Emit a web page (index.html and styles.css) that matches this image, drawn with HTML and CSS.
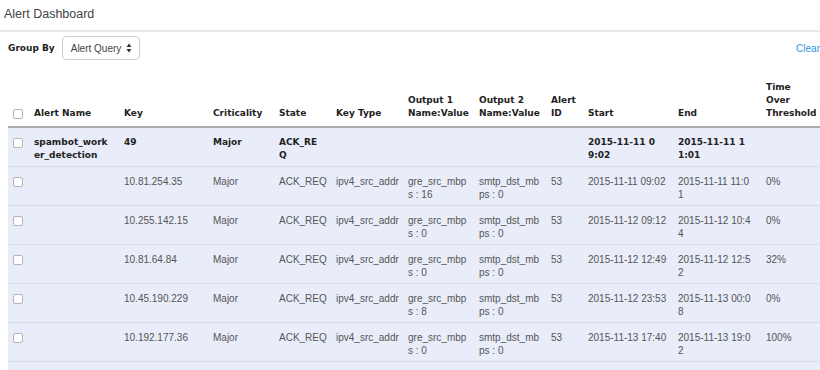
FILE: index.html
```html
<!DOCTYPE html>
<html lang="en">
<head>
    <meta charset="UTF-8">
    <title>Alert Dashboard</title>
    <link rel="stylesheet" href="styles.css">
</head>
<body>
    <div class="title-bar">Alert Dashboard</div>

    <div class="toolbar">
        <label class="group-label">Group By</label>
        <div class="select-box">
            <span>Alert Query</span>
            <svg class="select-arrows" width="6" height="10" viewBox="0 0 6 10">
                <path d="M3 0.5 L5.5 4 L0.5 4 Z" fill="#333"/>
                <path d="M0.5 6 L5.5 6 L3 9.5 Z" fill="#333"/>
            </svg>
        </div>
        <a class="clear-link" href="#">Clear</a>
    </div>

    <div class="table-wrap">
        <table class="alert-table">
            <colgroup>
                <col style="width: 26px">
                <col style="width: 90px">
                <col style="width: 89px">
                <col style="width: 66px">
                <col style="width: 57px">
                <col style="width: 72px">
                <col style="width: 71px">
                <col style="width: 72px">
                <col style="width: 37px">
                <col style="width: 90px">
                <col style="width: 88px">
                <col style="width: 59px">
            </colgroup>
            <thead>
                <tr>
                    <th class="check-cell"><input type="checkbox"></th>
                    <th>Alert Name</th>
                    <th>Key</th>
                    <th>Criticality</th>
                    <th>State</th>
                    <th>Key Type</th>
                    <th>Output 1 Name:Value</th>
                    <th>Output 2 Name:Value</th>
                    <th>Alert ID</th>
                    <th>Start</th>
                    <th>End</th>
                    <th class="col-time">Time Over Threshold</th>
                </tr>
            </thead>
            <tbody>
                <tr class="group-row">
                    <td class="check-cell"><input type="checkbox"></td>
                    <td>spambot_worker_detection</td>
                    <td>49</td>
                    <td>Major</td>
                    <td>ACK_REQ</td>
                    <td></td>
                    <td></td>
                    <td></td>
                    <td></td>
                    <td>2015-11-11 09:02</td>
                    <td>2015-11-11 11:01</td>
                    <td></td>
                </tr>
                <tr>
                    <td class="check-cell"><input type="checkbox"></td>
                    <td></td>
                    <td>10.81.254.35</td>
                    <td>Major</td>
                    <td>ACK_REQ</td>
                    <td>ipv4_src_addr</td>
                    <td>gre_src_mbps : 16</td>
                    <td>smtp_dst_mbps : 0</td>
                    <td>53</td>
                    <td>2015-11-11 09:02</td>
                    <td>2015-11-11 11:01</td>
                    <td>0%</td>
                </tr>
                <tr>
                    <td class="check-cell"><input type="checkbox"></td>
                    <td></td>
                    <td>10.255.142.15</td>
                    <td>Major</td>
                    <td>ACK_REQ</td>
                    <td>ipv4_src_addr</td>
                    <td>gre_src_mbps : 0</td>
                    <td>smtp_dst_mbps : 0</td>
                    <td>53</td>
                    <td>2015-11-12 09:12</td>
                    <td>2015-11-12 10:44</td>
                    <td>0%</td>
                </tr>
                <tr>
                    <td class="check-cell"><input type="checkbox"></td>
                    <td></td>
                    <td>10.81.64.84</td>
                    <td>Major</td>
                    <td>ACK_REQ</td>
                    <td>ipv4_src_addr</td>
                    <td>gre_src_mbps : 0</td>
                    <td>smtp_dst_mbps : 0</td>
                    <td>53</td>
                    <td>2015-11-12 12:49</td>
                    <td>2015-11-12 12:52</td>
                    <td>32%</td>
                </tr>
                <tr>
                    <td class="check-cell"><input type="checkbox"></td>
                    <td></td>
                    <td>10.45.190.229</td>
                    <td>Major</td>
                    <td>ACK_REQ</td>
                    <td>ipv4_src_addr</td>
                    <td>gre_src_mbps : 8</td>
                    <td>smtp_dst_mbps : 0</td>
                    <td>53</td>
                    <td>2015-11-12 23:53</td>
                    <td>2015-11-13 00:08</td>
                    <td>0%</td>
                </tr>
                <tr>
                    <td class="check-cell"><input type="checkbox"></td>
                    <td></td>
                    <td>10.192.177.36</td>
                    <td>Major</td>
                    <td>ACK_REQ</td>
                    <td>ipv4_src_addr</td>
                    <td>gre_src_mbps : 0</td>
                    <td>smtp_dst_mbps : 0</td>
                    <td>53</td>
                    <td>2015-11-13 17:40</td>
                    <td>2015-11-13 19:02</td>
                    <td>100%</td>
                </tr>
                <tr class="more-row">
                    <td colspan="12"></td>
                </tr>
            </tbody>
        </table>
    </div>
</body>
</html>
```

FILE: styles.css
```css
* {
    margin: 0;
    padding: 0;
    box-sizing: border-box;
}

body {
    background: #fff;
    font-family: 'Liberation Sans', Arial, sans-serif;
    font-size: 10px;
    color: #555;
    overflow: hidden;
}

.title-bar {
    height: 32px;
    padding: 0 4px;
    line-height: 29px;
    font-size: 12.5px;
    color: #444;
    border-bottom: 2px solid #e8e8e8;
}

.toolbar {
    display: flex;
    align-items: center;
    height: 32px;
    padding: 0 0 0 8px;
}

.group-label {
    font-family: 'DejaVu Sans', Verdana, sans-serif;
    font-weight: bold;
    font-size: 9px;
    color: #222;
    margin-right: 7px;
}

.select-box {
    display: flex;
    align-items: center;
    justify-content: space-between;
    width: 78px;
    height: 24px;
    padding: 0 7px 0 8px;
    border: 1px solid #ccc;
    border-radius: 4px;
    color: #444;
    background: #fff;
}

.clear-link {
    margin-left: auto;
    color: #2f93e0;
    text-decoration: none;
}

.table-wrap {
    padding: 9px 0 0 8px;
    overflow: hidden;
}

.alert-table {
    width: 817px;
    table-layout: fixed;
    border-collapse: collapse;
    line-height: 13px;
}

.alert-table th {
    font-family: 'DejaVu Sans', Verdana, sans-serif;
    font-size: 9px;
    font-weight: bold;
    color: #222;
    text-align: left;
    vertical-align: bottom;
    padding: 8px 6px 6px 0;
    border-bottom: 2px solid #aaa;
}

.alert-table th.col-time {
    padding-right: 8px;
}

.alert-table td {
    vertical-align: top;
    padding: 8px 8px 4px 0;
    word-break: break-all;
    background: #e8edf9;
    border-bottom: 1px solid #d6dcea;
}

/* End column wraps its time one digit early */
.alert-table td:nth-child(11) {
    padding-right: 12px;
}

.alert-table .check-cell {
    padding-left: 5px;
}

.group-row td {
    font-family: 'DejaVu Sans', Verdana, sans-serif;
    font-size: 9px;
    font-weight: bold;
    color: #222;
}

.alert-table .group-row td {
    padding-right: 14px;
}

.alert-table .group-row td:nth-child(10) {
    padding-right: 18px;
}

.alert-table .group-row td:nth-child(11) {
    padding-right: 18px;
}

.alert-table .more-row td {
    height: 39px;
}

input[type="checkbox"] {
    appearance: none;
    display: block;
    width: 10px;
    height: 10px;
    margin-top: 2px;
    border: 1px solid #b4b4b4;
    border-radius: 2px;
    background: #fff;
}

th input[type="checkbox"] {
    margin: 0 0 1px;
}
```
